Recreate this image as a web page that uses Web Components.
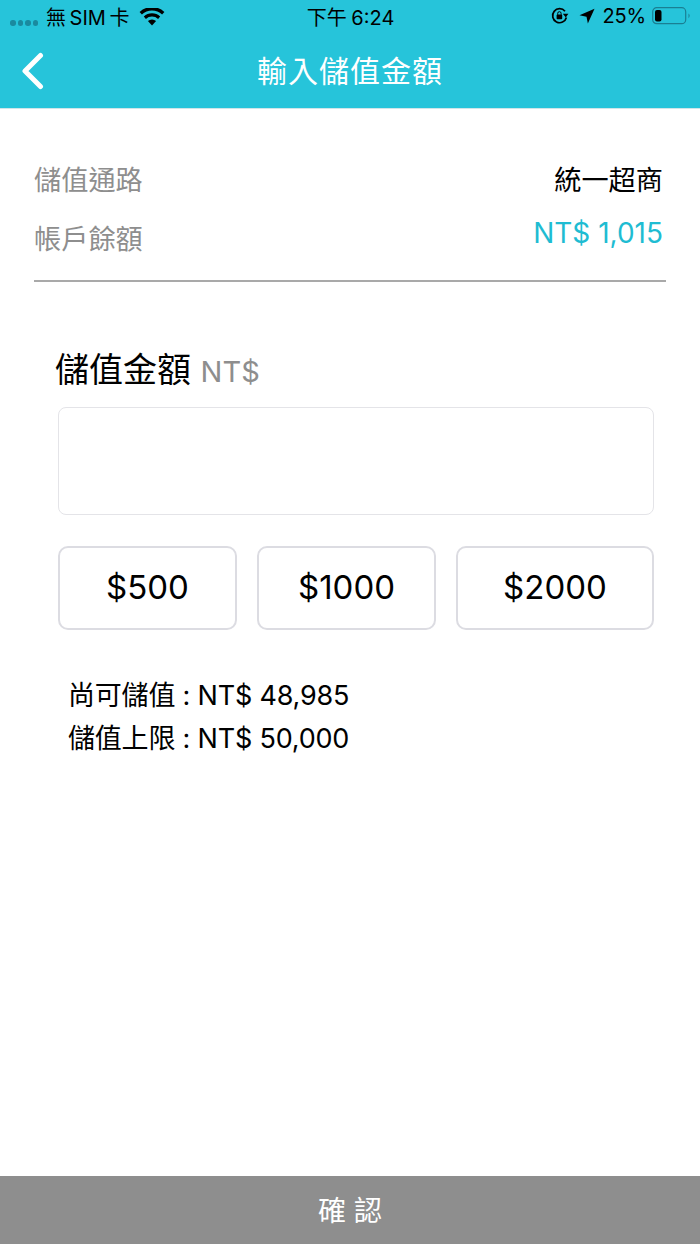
<!DOCTYPE html>
<html lang="zh-Hant">
<head>
<meta charset="utf-8">
<title>輸入儲值金額</title>
<style>
html, body { margin: 0; height: 100%; }
body {
    background: #fff;
    font-family: Inter, "Noto Sans CJK TC", sans-serif;
}
</style>
</head>
<body>
<topup-page></topup-page>

<script>
class StatusBar extends HTMLElement {
    constructor() {
        super();
        this.attachShadow({ mode : "open" });
    }
    connectedCallback() {
        this.shadowRoot.innerHTML = `
        <style>
            :host {
                display : grid;
                grid-template-columns : 1fr auto 1fr;
                align-items : center;
                height : 32px;
                padding : 0 9px 0 10px;
                font-size : 20px;
                color : #000;
            }
            .left, .right { display : flex; align-items : center; }
            .right { justify-content : flex-end; }
            .dots { display : flex; gap : 2px; margin : 14px 7px 0 0; }
            .dots i { width : 5.5px; height : 5.5px; border-radius : 50%; background : #1a8a9f; }
            .sim { white-space : nowrap; word-spacing : -2px; margin-left : 1px; }
            .wifi { margin : 2px 0 0 9px; }
            .time { word-spacing : -1px; }
            .pct { margin : 0 6px 0 8px; letter-spacing : -.2px; }
            .loc { margin-left : 10px; }
        </style>
        <div class="left">
            <span class="dots"><i></i><i></i><i></i><i></i></span>
            <span class="sim">無 SIM 卡</span>
            <svg class="wifi" width="26" height="18" viewBox="0 0 26 18">
                <path d="M13 17.5 8.9 13a6 6 0 0 1 8.2 0z"/>
                <path d="M6.9 10.9 4.8 8.6a12 12 0 0 1 16.4 0l-2.1 2.3a9 9 0 0 0-12.2 0z"/>
                <path d="M2.9 6.5.6 4a18 18 0 0 1 24.8 0l-2.3 2.5a15 15 0 0 0-20.2 0z"/>
            </svg>
        </div>
        <div class="time">下午 6:24</div>
        <div class="right">
            <svg width="18" height="18" viewBox="0 0 18 18">
                <path d="M15.4 10.5A7 7 0 1 1 14 4.2" fill="none" stroke="#000" stroke-width="1.7"/>
                <path d="M11.8 6.8h5.6l-2.6 3.6z"/>
                <rect x="5.6" y="7.6" width="5.6" height="4.6" rx=".8"/>
                <path d="M6.7 7.8V6.4a1.7 1.7 0 0 1 3.4 0v1.4" fill="none" stroke="#000" stroke-width="1"/>
            </svg>
            <svg class="loc" width="16" height="16" viewBox="0 0 17 17">
                <path d="M16.5.8 9.4 16.5 8 9.2.5 7.8z"/>
            </svg>
            <span class="pct">25%</span>
            <svg width="39" height="20" viewBox="0 0 39 20">
                <rect x=".7" y="1.7" width="33" height="16" rx="4" fill="none" stroke="#1a7f93" stroke-width="1.2"/>
                <rect x="3" y="4" width="6.5" height="11.5" rx="2"/>
                <path d="M36.5 7.5a3 3 0 0 1 0 4.7z" fill="#1a7f93"/>
            </svg>
        </div>
        `;
    }
}

class NavBar extends HTMLElement {
    constructor() {
        super();
        this.attachShadow({ mode : "open" });
    }
    connectedCallback() {
        this.shadowRoot.innerHTML = `
        <style>
            :host {
                display : flex;
                align-items : center;
                justify-content : center;
                position : relative;
                box-sizing : border-box;
                height : 76px;
                padding-bottom : 2px;
                color : #fff;
                font-size : 30px;
                letter-spacing : 1px;
            }
            svg { position : absolute; left : 20px; top : 20px; }
        </style>
        <svg width="26" height="38" viewBox="0 0 26 38">
            <path d="M20.5 3.5 5 19l15.5 15.5" fill="none" stroke="#fff" stroke-width="5" stroke-linecap="round" stroke-linejoin="round"/>
        </svg>
        <slot></slot>
        `;
    }
}

class InfoRow extends HTMLElement {
    constructor() {
        super();
        this.attachShadow({ mode : "open" });
    }
    connectedCallback() {
        this.shadowRoot.innerHTML = `
        <style>
            :host {
                display : flex;
                justify-content : space-between;
                align-items : center;
                height : 59px;
                font-size : 27.2px;
            }
            .label { color : #8e8e8e; }
            .value {
                margin-right : 3px;
                color : var(--value-color, #000);
                font-size : var(--value-size, 27.2px);
                transform : translateY(var(--value-lift, 0));
            }
        </style>
        <span class="label">${this.getAttribute('label')}</span>
        <span class="value"><slot></slot></span>
        `;
    }
}

class AmountButton extends HTMLElement {
    constructor() {
        super();
        this.attachShadow({ mode : "open" });
    }
    connectedCallback() {
        this.shadowRoot.innerHTML = `
        <style>
            :host {
                display : flex;
                align-items : center;
                justify-content : center;
                box-sizing : border-box;
                height : 84px;
                padding-bottom : 2px;
                border : 2px solid #dcdce2;
                border-radius : 10px;
                font-size : 33px;
                color : #000;
            }
        </style>
        <slot></slot>
        `;
    }
}

class TopupPage extends HTMLElement {
    constructor() {
        super();
        this.attachShadow({ mode : "open" });
    }
    connectedCallback() {
        this.shadowRoot.innerHTML = `
        <style>
            :host {
                display : flex;
                flex-direction : column;
                height : 1244px;
                font-family : Inter, "Noto Sans CJK TC", sans-serif;
            }
            header { background : #26c4da; border-bottom : 1px solid #cfe5e9; }
            main { flex : 1; display : flex; flex-direction : column; }
            .info {
                margin : 39px 34px 0;
                padding-bottom : 14px;
                border-bottom : 2px solid #a9a9a9;
            }
            .teal {
                --value-color : #1fbcd2;
                --value-size : 28px;
                --value-lift : -4px;
            }
            .form { padding : 63px 46px 0 58px; }
            .title { font-size : 34px; line-height : 50px; margin-left : -3px; color : #000; }
            .title span { font-size : 29px; color : #8e8e8e; }
            .input {
                height : 108px;
                box-sizing : border-box;
                margin-top : 10px;
                border : 1px solid #e4e4e8;
                border-radius : 8px;
            }
            .amounts {
                display : grid;
                grid-template-columns : 179px 179px 198px;
                gap : 20px;
                margin-top : 31px;
            }
            .limits {
                margin : 44px 0 0 10px;
                font-size : 27px;
                line-height : 43px;
                letter-spacing : -.2px;
                color : #000;
            }
            footer {
                box-sizing : border-box;
                height : 68px;
                padding-bottom : 2px;
                display : flex;
                align-items : center;
                justify-content : center;
                background : #8e8e8e;
                color : #fff;
                font-size : 28px;
            }
        </style>
        <header>
            <status-bar></status-bar>
            <nav-bar>輸入儲值金額</nav-bar>
        </header>
        <main>
            <div class="info">
                <info-row label="儲值通路">統一超商</info-row>
                <info-row label="帳戶餘額" class="teal">NT$ 1,015</info-row>
            </div>
            <div class="form">
                <div class="title">儲值金額 <span>NT$</span></div>
                <div class="input"></div>
                <div class="amounts">
                    <amount-button>$500</amount-button>
                    <amount-button>$1000</amount-button>
                    <amount-button>$2000</amount-button>
                </div>
                <div class="limits">
                    <div>尚可儲值 : NT$ 48,985</div>
                    <div>儲值上限 : NT$ 50,000</div>
                </div>
            </div>
        </main>
        <footer>確 認</footer>
        `;
    }
}

window.customElements.define('status-bar', StatusBar);
window.customElements.define('nav-bar', NavBar);
window.customElements.define('info-row', InfoRow);
window.customElements.define('amount-button', AmountButton);
window.customElements.define('topup-page', TopupPage);
</script>
</body>
</html>
